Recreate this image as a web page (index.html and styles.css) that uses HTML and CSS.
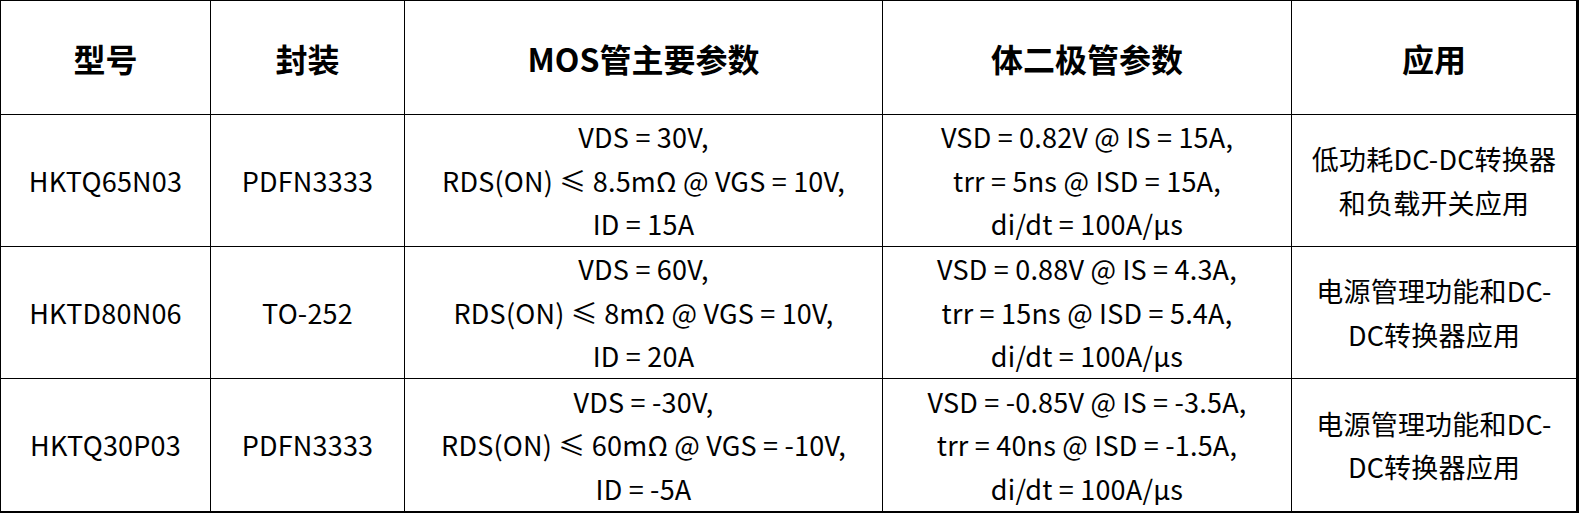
FILE: index.html
```html
<!DOCTYPE html>
<html lang="zh-CN">
<head>
<meta charset="utf-8">
<title>MOS管参数表</title>
<link rel="stylesheet" href="styles.css">
</head>
<body>
<table class="spec">
  <thead>
    <tr>
      <th class="c-model">型号</th>
      <th class="c-pkg">封装</th>
      <th class="c-mos">MOS管主要参数</th>
      <th class="c-diode">体二极管参数</th>
      <th class="c-app">应用</th>
    </tr>
  </thead>
  <tbody>
    <tr>
      <td>HKTQ65N03</td>
      <td>PDFN3333</td>
      <td>VDS = 30V,<br>RDS(ON) ≤ 8.5mΩ @ VGS = 10V,<br>ID = 15A</td>
      <td>VSD = 0.82V @ IS = 15A,<br>trr = 5ns @ ISD = 15A,<br>di/dt = 100A/μs</td>
      <td>低功耗DC-DC转换器<br>和负载开关应用</td>
    </tr>
    <tr>
      <td>HKTD80N06</td>
      <td>TO-252</td>
      <td>VDS = 60V,<br>RDS(ON) ≤ 8mΩ @ VGS = 10V,<br>ID = 20A</td>
      <td>VSD = 0.88V @ IS = 4.3A,<br>trr = 15ns @ ISD = 5.4A,<br>di/dt = 100A/μs</td>
      <td>电源管理功能和DC-<br>DC转换器应用</td>
    </tr>
    <tr>
      <td>HKTQ30P03</td>
      <td>PDFN3333</td>
      <td>VDS = -30V,<br>RDS(ON) ≤ 60mΩ @ VGS = -10V,<br>ID = -5A</td>
      <td>VSD = -0.85V @ IS = -3.5A,<br>trr = 40ns @ ISD = -1.5A,<br>di/dt = 100A/μs</td>
      <td>电源管理功能和DC-<br>DC转换器应用</td>
    </tr>
  </tbody>
</table>
</body>
</html>
```

FILE: styles.css
```css
html, body {
  margin: 0;
  padding: 0;
  background: #ffffff;
}

body {
  font-family: "Noto Sans CJK SC", "Noto Sans", "Liberation Sans", sans-serif;
  color: #000000;
}

.spec {
  border-collapse: separate;
  border-spacing: 0;
  table-layout: fixed;
  width: 1579px;
  border-top: 1px solid #000;
  border-left: 1px solid #000;
  border-right: 3px solid #000;
  border-bottom: 2px solid #000;
}

.spec th,
.spec td {
  box-sizing: border-box;
  padding: 0 8px;
  text-align: center;
  vertical-align: middle;
  border-right: 1px solid #000;
  border-bottom: 1px solid #000;
  overflow: hidden;
}

.spec th:last-child,
.spec td:last-child {
  border-right: none;
}

.spec tbody tr:last-child td {
  border-bottom: none;
}

.spec th {
  height: 114px;
  font-size: 32px;
  font-weight: 700;
  line-height: 40px;
}

.spec td {
  height: 132px;
  font-size: 27px;
  font-weight: 400;
  line-height: 43.5px;
  letter-spacing: 0.2px;
}

.c-model { width: 210px; }
.c-pkg { width: 194px; }
.c-mos { width: 478px; }
.c-diode { width: 409px; }
.c-app { width: 284px; }
```
